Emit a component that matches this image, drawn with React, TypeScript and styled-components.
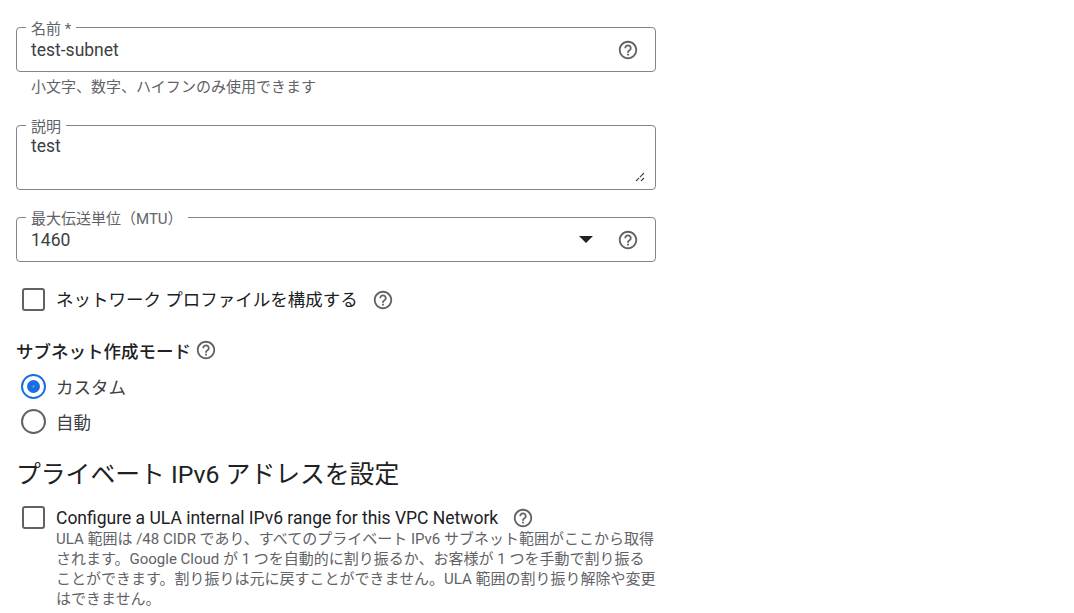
import React from "react";
import styled, { createGlobalStyle } from "styled-components";
import { MdHelpOutline } from "react-icons/md";

const Global = createGlobalStyle`
  html, body { margin: 0; padding: 0; background: #fff; overflow: hidden; }
  body { font-family: Roboto, "Noto Sans CJK JP", sans-serif; color: #202124; }
`;

const Page = styled.main`
  display: flex;
  flex-direction: column;
  width: 640px;
  padding: 27px 0 0 16px;
`;

const Field = styled.div<{ $height: number; $mt?: number }>`
  position: relative;
  box-sizing: border-box;
  display: flex;
  align-items: center;
  height: ${(p) => p.$height}px;
  margin-top: ${(p) => p.$mt ?? 0}px;
  padding: 0 16px 0 14px;
  border: 1px solid #80868b;
  border-radius: 4px;
  flex-shrink: 0;
`;

const FieldLabel = styled.label`
  position: absolute;
  left: 9px;
  top: -6px;
  padding: 0 5px;
  background: #fff;
  font-size: 15px;
  line-height: 15px;
  color: #5f6368;
`;

const Value = styled.span`
  flex: 1;
  font-size: 17.5px;
  line-height: 20px;
  color: #3c4043;
`;

const TextValue = styled(Value)`
  align-self: flex-start;
  margin-top: 10px;
`;

const Hint = styled.div`
  font-size: 15px;
  line-height: 20px;
  color: #5f6368;
  margin: 5px 0 0 15px;
`;

const Help = styled(MdHelpOutline)<{ $ml?: number }>`
  display: block;
  width: 22px;
  height: 22px;
  color: #5f6368;
  flex-shrink: 0;
  margin-left: ${(p) => p.$ml ?? 0}px;
`;

const Grip = styled.svg`
  position: absolute;
  right: 10px;
  bottom: 7px;
`;

const Caret = styled.span`
  width: 0;
  height: 0;
  border-left: 7px solid transparent;
  border-right: 7px solid transparent;
  border-top: 7px solid #202124;
  margin-right: 24px;
`;

const CheckRow = styled.div<{ $mt: number; $align?: string }>`
  display: flex;
  align-items: ${(p) => p.$align ?? "center"};
  margin-top: ${(p) => p.$mt}px;
  padding-left: 6px;
`;

const CheckBox = styled.span`
  box-sizing: border-box;
  width: 23px;
  height: 23px;
  border: 2px solid #5f6368;
  border-radius: 3px;
  flex-shrink: 0;
  margin-right: 11px;
`;

const CheckText = styled.span`
  font-size: 17.5px;
  line-height: 22px;
  color: #202124;
`;

const InlineLine = styled.div`
  display: flex;
  align-items: center;
  height: 24px;
`;

const Description = styled.div`
  font-size: 15px;
  line-height: 20px;
  color: #5f6368;
  width: 600px;
  margin-top: -1px;
`;

const GroupTitle = styled.div`
  display: flex;
  align-items: center;
  height: 24px;
  margin-top: 27px;
  font-size: 17.5px;
  font-weight: 500;
  color: #202124;
`;

const RadioGroup = styled.div`
  display: flex;
  flex-direction: column;
  gap: 10px;
  margin-top: 12px;
  padding-left: 5px;
`;

const RadioRow = styled.div`
  display: flex;
  align-items: center;
  height: 25px;
  font-size: 17.5px;
  color: #3c4043;
`;

const Radio = styled.span<{ $on?: boolean }>`
  box-sizing: border-box;
  display: flex;
  align-items: center;
  justify-content: center;
  width: 25px;
  height: 25px;
  border-radius: 50%;
  border: 2px solid ${(p) => (p.$on ? "#1a6fe0" : "#5f6368")};
  margin-right: 10px;
  flex-shrink: 0;
  &::after {
    content: "";
    display: ${(p) => (p.$on ? "block" : "none")};
    width: 13px;
    height: 13px;
    border-radius: 50%;
    background: radial-gradient(circle, #5f9bf0 0 0.8px, #1a6fe0 1.5px);
  }
`;

const SectionTitle = styled.h2`
  margin: 25px 0 0;
  font-size: 24.8px;
  line-height: 32px;
  font-weight: 400;
  color: #202124;
`;

export default function App() {
  return (
    <>
      <Global />
      <Page>
        <Field $height={45}>
          <FieldLabel>名前 *</FieldLabel>
          <Value>test-subnet</Value>
          <Help />
        </Field>
        <Hint>小文字、数字、ハイフンのみ使用できます</Hint>

        <Field $height={65} $mt={28}>
          <FieldLabel>説明</FieldLabel>
          <TextValue>test</TextValue>
          <Grip width="10" height="10" viewBox="0 0 10 10" fill="none" stroke="#3c4043" strokeWidth="1.1">
            <path d="M1 9 L9 1" strokeDasharray="4.5 1 6" />
            <path d="M6 9 L9 6" />
          </Grip>
        </Field>

        <Field $height={45} $mt={27}>
          <FieldLabel>最大伝送単位（MTU）</FieldLabel>
          <Value>1460</Value>
          <Caret />
          <Help />
        </Field>

        <CheckRow $mt={26}>
          <CheckBox />
          <CheckText>ネットワーク プロファイルを構成する</CheckText>
          <Help $ml={14} />
        </CheckRow>

        <GroupTitle>
          サブネット作成モード
          <Help $ml={4} />
        </GroupTitle>

        <RadioGroup>
          <RadioRow>
            <Radio $on />
            カスタム
          </RadioRow>
          <RadioRow>
            <Radio />
            自動
          </RadioRow>
        </RadioGroup>

        <SectionTitle>プライベート IPv6 アドレスを設定</SectionTitle>

        <CheckRow $mt={15} $align="flex-start">
          <CheckBox />
          <div>
            <InlineLine>
              <CheckText>Configure a ULA internal IPv6 range for this VPC Network</CheckText>
              <Help $ml={14} />
            </InlineLine>
            <Description>
              ULA 範囲は /48 CIDR であり、すべてのプライベート IPv6 サブネット範囲がここから取得されます。Google Cloud が 1 つを自動的に割り振るか、お客様が 1 つを手動で割り振ることができます。割り振りは元に戻すことができません。ULA 範囲の割り振り解除や変更はできません。
            </Description>
          </div>
        </CheckRow>
      </Page>
    </>
  );
}
